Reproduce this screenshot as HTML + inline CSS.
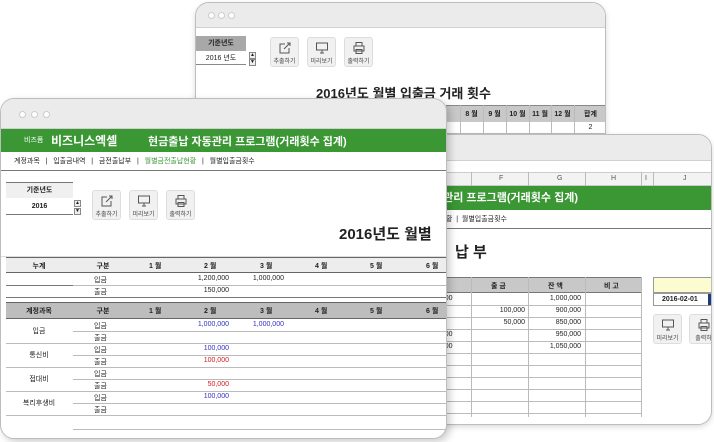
<!DOCTYPE html>
<html><head><meta charset="utf-8"><style>
*{margin:0;padding:0;box-sizing:border-box}
body{width:714px;height:442px;background:#fff;position:relative;overflow:hidden;font-family:"Liberation Sans","Noto Sans CJK KR",sans-serif;color:#222}
.a{position:absolute}
.win{position:absolute;background:#fff;border:1px solid #bdbdbd;border-radius:14px;overflow:hidden;box-shadow:0 2px 6px rgba(0,0,0,.15)}
.bar{position:absolute;left:0;right:0;top:0;background:#ebebeb;border-bottom:1px solid #d0d0d0}
.dot{position:absolute;width:7px;height:7px;border-radius:50%;background:#fff;border:1px solid #ccc}
.btn{position:absolute;width:29px;height:30px;background:#f1f1f1;border:1px solid #ddd;border-radius:3px;font-size:6px;text-align:center;color:#444}
.btn svg{display:block;margin:3px auto 1px}
.t{position:absolute;font-size:7px;white-space:nowrap}
.c{text-align:center}
.r{text-align:right}
.hl{position:absolute;height:1px;background:#bbb}
.vl{position:absolute;width:1px;background:#bbb}
.sp{position:absolute;width:7px;height:7px;border:1px solid #888;background:#eee;font-size:5px;line-height:5px;text-align:center;color:#222}
</style></head><body>

<!-- back window -->
<div class="win" style="left:195px;top:2px;width:411px;height:180px">
 <div class="bar" style="height:25px"></div>
 <div class="dot" style="left:12px;top:9px"></div><div class="dot" style="left:22px;top:9px"></div><div class="dot" style="left:32px;top:9px"></div>
 <div class="a" style="left:0;top:33px;width:50px;height:15px;background:#a8a8a8;font-size:7px;font-weight:bold;text-align:center;line-height:15px">기준년도</div>
 <div class="a" style="left:0;top:49px;width:50px;height:13px;border-bottom:1px solid #888;font-size:7px;text-align:center;line-height:13px">2016 년도</div>
 <div class="sp" style="left:53px;top:49px">▲</div><div class="sp" style="left:53px;top:56px">▼</div>
 <div class="btn" style="left:74px;top:34px"><svg width="14" height="14" viewBox="0 0 14 14" fill="none" stroke="#555"><path d="M9 2h3v3M12 2L6 8M7 3H2v9h9V7"/></svg>추출하기</div>
 <div class="btn" style="left:111px;top:34px"><svg width="14" height="14" viewBox="0 0 14 14" fill="none" stroke="#555"><rect x="1.5" y="2" width="11" height="7"/><path d="M5 12h4M7 9v3"/></svg>미리보기</div>
 <div class="btn" style="left:148px;top:34px"><svg width="14" height="14" viewBox="0 0 14 14" fill="none" stroke="#555"><path d="M4 5V1.5h6V5M2 5h10v5H2zM4 8.5h6v4H4z"/></svg>출력하기</div>
 <div class="a" style="left:120px;top:80px;font-size:13px;font-weight:bold">2016년도 월별 입출금 거래 횟수</div>
 <div class="a" style="left:250px;top:102px;width:161px;height:17px;background:#c8c8c8;border-top:1px solid #888"></div>
 <div class="a" style="left:250px;top:119px;width:161px;height:12px;border-bottom:1px solid #bbb"></div>
 <div class="t c" style="left:264px;top:106px;width:23px;font-weight:bold">8 월</div>
 <div class="t c" style="left:287px;top:106px;width:23px;font-weight:bold">9 월</div>
 <div class="t c" style="left:310px;top:106px;width:23px;font-weight:bold">10 월</div>
 <div class="t c" style="left:333px;top:106px;width:22px;font-weight:bold">11 월</div>
 <div class="t c" style="left:355px;top:106px;width:23px;font-weight:bold">12 월</div>
 <div class="t c" style="left:378px;top:106px;width:33px;font-weight:bold">합계</div>
 <div class="t c" style="left:378px;top:121px;width:33px">2</div>
 <div class="vl" style="left:264px;top:102px;height:30px"></div><div class="vl" style="left:287px;top:102px;height:30px"></div><div class="vl" style="left:310px;top:102px;height:30px"></div><div class="vl" style="left:333px;top:102px;height:30px"></div><div class="vl" style="left:355px;top:102px;height:30px"></div><div class="vl" style="left:378px;top:102px;height:30px"></div>
</div>

<!-- middle window -->
<div class="win" style="left:430px;top:134px;width:282px;height:291px">
 <div class="bar" style="height:26px"></div>
 <div class="a" style="left:0;top:37px;width:282px;height:14px;background:#f3f3f3;border-top:1px solid #ccc;border-bottom:1px solid #ccc"></div>
 <div class="t" style="left:68px;top:40px;color:#555">F</div><div class="t" style="left:126px;top:40px;color:#555">G</div><div class="t" style="left:180px;top:40px;color:#555">H</div><div class="t" style="left:214px;top:40px;color:#555">I</div><div class="t" style="left:252px;top:40px;color:#555">J</div>
 <div class="vl" style="left:40px;top:37px;height:14px"></div><div class="vl" style="left:97px;top:37px;height:14px"></div><div class="vl" style="left:154px;top:37px;height:14px"></div><div class="vl" style="left:210px;top:37px;height:14px"></div><div class="vl" style="left:222px;top:37px;height:14px"></div>
 <div class="a" style="left:0;top:51px;width:282px;height:24px;background:#3a9734;color:#fff;font-size:11px;font-weight:bold;line-height:24px;padding-left:2px;white-space:nowrap">동관리 프로그램(거래횟수 집계)</div>
 <div class="a" style="left:0;top:75px;width:282px;height:19px;border-bottom:1px solid #777;font-size:7px;line-height:19px;white-space:nowrap;padding-left:2px">잔현황 &nbsp;|&nbsp; 월별입출금횟수</div>
 <div class="a" style="left:24px;top:106px;font-size:15px;font-weight:bold">납 부</div>
 <div class="a" style="left:0;top:142px;width:210px;height:16px;background:#c8c8c8;border-top:1px solid #777;border-bottom:1px solid #777"></div>
 <div class="t" style="left:60px;top:146px;font-weight:bold">출 금</div><div class="t" style="left:117px;top:146px;font-weight:bold">잔 액</div><div class="t" style="left:173px;top:146px;font-weight:bold">비 고</div>
 <div class="hl" style="left:0;top:170px;width:210px"></div><div class="hl" style="left:0;top:182px;width:210px"></div><div class="hl" style="left:0;top:194px;width:210px"></div><div class="hl" style="left:0;top:206px;width:210px"></div><div class="hl" style="left:0;top:218px;width:210px"></div><div class="hl" style="left:0;top:230px;width:210px"></div><div class="hl" style="left:0;top:242px;width:210px"></div><div class="hl" style="left:0;top:254px;width:210px"></div><div class="hl" style="left:0;top:266px;width:210px"></div><div class="hl" style="left:0;top:278px;width:210px"></div>
 <div class="vl" style="left:40px;top:142px;height:140px"></div><div class="vl" style="left:97px;top:142px;height:140px"></div><div class="vl" style="left:154px;top:142px;height:140px"></div><div class="vl" style="left:210px;top:142px;height:140px"></div>
 <div class="t" style="left:4px;top:160px">0,000</div><div class="t r" style="left:110px;top:160px;width:40px">1,000,000</div>
 <div class="t r" style="left:54px;top:172px;width:40px">100,000</div><div class="t r" style="left:110px;top:172px;width:40px">900,000</div>
 <div class="t r" style="left:54px;top:184px;width:40px">50,000</div><div class="t r" style="left:110px;top:184px;width:40px">850,000</div>
 <div class="t" style="left:4px;top:196px">0,000</div><div class="t r" style="left:110px;top:196px;width:40px">950,000</div>
 <div class="t" style="left:4px;top:208px">0,000</div><div class="t r" style="left:110px;top:208px;width:40px">1,050,000</div>
 <div class="a" style="left:222px;top:142px;width:60px;height:16px;background:#fdfbd0;border:1px solid #999"></div>
 <div class="a" style="left:222px;top:158px;width:60px;height:13px;border:1px solid #999;font-size:7px;font-weight:bold;line-height:12px;padding-left:8px">2016-02-01</div>
 <div class="a" style="left:277px;top:159px;width:5px;height:11px;background:#1d3b7a"></div>
 <div class="btn" style="left:222px;top:179px"><svg width="14" height="14" viewBox="0 0 14 14" fill="none" stroke="#555"><rect x="1.5" y="2" width="11" height="7"/><path d="M5 12h4M7 9v3"/></svg>미리보기</div>
 <div class="btn" style="left:258px;top:179px"><svg width="14" height="14" viewBox="0 0 14 14" fill="none" stroke="#555"><path d="M4 5V1.5h6V5M2 5h10v5H2zM4 8.5h6v4H4z"/></svg>출력하</div>
</div>

<!-- front window -->
<div class="win" style="left:0;top:98px;width:447px;height:341px;box-shadow:3px 3px 8px rgba(0,0,0,.2)">
 <div class="bar" style="height:30px"></div>
 <div class="dot" style="left:18px;top:12px"></div><div class="dot" style="left:30px;top:12px"></div><div class="dot" style="left:42px;top:12px"></div>
 <div class="a" style="left:0;top:30px;width:447px;height:23px;background:#3a9734;color:#fff;white-space:nowrap">
  <span class="a" style="left:23px;top:6px;font-size:7px">비즈폼</span>
  <span class="a" style="left:50px;top:3px;font-size:12px;font-weight:bold">비즈니스엑셀</span>
  <span class="a" style="left:147px;top:4px;font-size:11px;font-weight:bold">현금출납 자동관리 프로그램(거래횟수 집계)</span>
 </div>
 <div class="a" style="left:0;top:53px;width:447px;height:19px;border-bottom:1px solid #777;font-size:7px;line-height:19px;white-space:nowrap;padding-left:13px;color:#222">계정과목 &nbsp;&nbsp;|&nbsp;&nbsp; 입출금내역 &nbsp;&nbsp;|&nbsp;&nbsp; 금전출납부 &nbsp;&nbsp;|&nbsp;&nbsp; <span style="color:#3a9734">월별금전출납현황</span> &nbsp;&nbsp;|&nbsp;&nbsp; 월별입출금횟수</div>
 <div class="a" style="left:5px;top:83px;width:67px;height:16px;border-top:1px solid #777;background:#f0f0f0;font-size:7px;font-weight:bold;text-align:center;line-height:15px">기준년도</div>
 <div class="a" style="left:5px;top:100px;width:67px;height:16px;border-bottom:1px solid #777;font-size:7px;font-weight:bold;text-align:center;line-height:15px">2016</div>
 <div class="sp" style="left:73px;top:101px">▲</div><div class="sp" style="left:73px;top:109px">▼</div>
 <div class="btn" style="left:91px;top:91px"><svg width="14" height="14" viewBox="0 0 14 14" fill="none" stroke="#555"><path d="M9 2h3v3M12 2L6 8M7 3H2v9h9V7"/></svg>추출하기</div>
 <div class="btn" style="left:128px;top:91px"><svg width="14" height="14" viewBox="0 0 14 14" fill="none" stroke="#555"><rect x="1.5" y="2" width="11" height="7"/><path d="M5 12h4M7 9v3"/></svg>미리보기</div>
 <div class="btn" style="left:165px;top:91px"><svg width="14" height="14" viewBox="0 0 14 14" fill="none" stroke="#555"><path d="M4 5V1.5h6V5M2 5h10v5H2zM4 8.5h6v4H4z"/></svg>출력하기</div>
 <div class="a" style="left:338px;top:124px;font-size:15px;font-weight:bold;white-space:nowrap">2016년도 월별</div>
 <div class="hl" style="left:0;top:157px;width:447px;background:#ddd"></div>
 <div class="a" style="left:5px;top:158px;width:442px;height:16px;background:#ededed;border-top:1px solid #666;border-bottom:1px solid #666"></div>
 <div class="hl" style="left:72px;top:186px;width:375px"></div><div class="hl" style="left:5px;top:186px;width:67px;background:#777"></div>
 <div class="hl" style="left:5px;top:198px;width:442px;background:#777"></div>
 <div class="a" style="left:5px;top:203px;width:442px;height:17px;background:#bdbdbd;border-top:1px solid #666;border-bottom:1px solid #666"></div>
 <div class="t c" style="left:18px;top:162px;width:40px;font-weight:bold">누계</div>
 <div class="t c" style="left:18px;top:207px;width:40px;font-weight:bold">계정과목</div>
 <div class="t c" style="left:82px;top:162px;width:40px;font-weight:bold">구분</div><div class="t c" style="left:82px;top:207px;width:40px;font-weight:bold">구분</div>
 <div class="t" style="left:148px;top:162px;font-weight:bold">1 월</div><div class="t" style="left:203px;top:162px;font-weight:bold">2 월</div><div class="t" style="left:259px;top:162px;font-weight:bold">3 월</div><div class="t" style="left:314px;top:162px;font-weight:bold">4 월</div><div class="t" style="left:369px;top:162px;font-weight:bold">5 월</div><div class="t" style="left:425px;top:162px;font-weight:bold">6 월</div>
 <div class="t" style="left:148px;top:207px;font-weight:bold">1 월</div><div class="t" style="left:203px;top:207px;font-weight:bold">2 월</div><div class="t" style="left:259px;top:207px;font-weight:bold">3 월</div><div class="t" style="left:314px;top:207px;font-weight:bold">4 월</div><div class="t" style="left:369px;top:207px;font-weight:bold">5 월</div><div class="t" style="left:425px;top:207px;font-weight:bold">6 월</div>
 <div class="t" style="left:93px;top:176px">입금</div><div class="t r" style="left:178px;top:176px;width:50px">1,200,000</div><div class="t r" style="left:233px;top:176px;width:50px">1,000,000</div>
 <div class="t" style="left:93px;top:188px">출금</div><div class="t r" style="left:178px;top:188px;width:50px">150,000</div>
 <div class="hl" style="left:72px;top:232px;width:375px"></div><div class="hl" style="left:5px;top:244px;width:442px"></div>
 <div class="hl" style="left:72px;top:256px;width:375px"></div><div class="hl" style="left:5px;top:268px;width:442px"></div>
 <div class="hl" style="left:72px;top:280px;width:375px"></div><div class="hl" style="left:5px;top:292px;width:442px"></div>
 <div class="hl" style="left:72px;top:304px;width:375px"></div><div class="hl" style="left:5px;top:316px;width:442px"></div>
 <div class="hl" style="left:72px;top:330px;width:375px"></div>
 <div class="t c" style="left:18px;top:227px;width:40px">입금</div>
 <div class="t c" style="left:18px;top:251px;width:40px">통신비</div>
 <div class="t c" style="left:18px;top:275px;width:40px">접대비</div>
 <div class="t c" style="left:12px;top:299px;width:52px">복리후생비</div>
 <div class="t" style="left:93px;top:222px">입금</div><div class="t" style="left:93px;top:234px">출금</div>
 <div class="t" style="left:93px;top:246px">입금</div><div class="t" style="left:93px;top:258px">출금</div>
 <div class="t" style="left:93px;top:270px">입금</div><div class="t" style="left:93px;top:282px">출금</div>
 <div class="t" style="left:93px;top:294px">입금</div><div class="t" style="left:93px;top:306px">출금</div>
 <div class="t r" style="left:178px;top:222px;width:50px;color:#3030c0">1,000,000</div><div class="t r" style="left:233px;top:222px;width:50px;color:#3030c0">1,000,000</div>
 <div class="t r" style="left:178px;top:246px;width:50px;color:#3030c0">100,000</div>
 <div class="t r" style="left:178px;top:258px;width:50px;color:#d02020">100,000</div>
 <div class="t r" style="left:178px;top:282px;width:50px;color:#d02020">50,000</div>
 <div class="t r" style="left:178px;top:294px;width:50px;color:#3030c0">100,000</div>
</div>
</body></html>
